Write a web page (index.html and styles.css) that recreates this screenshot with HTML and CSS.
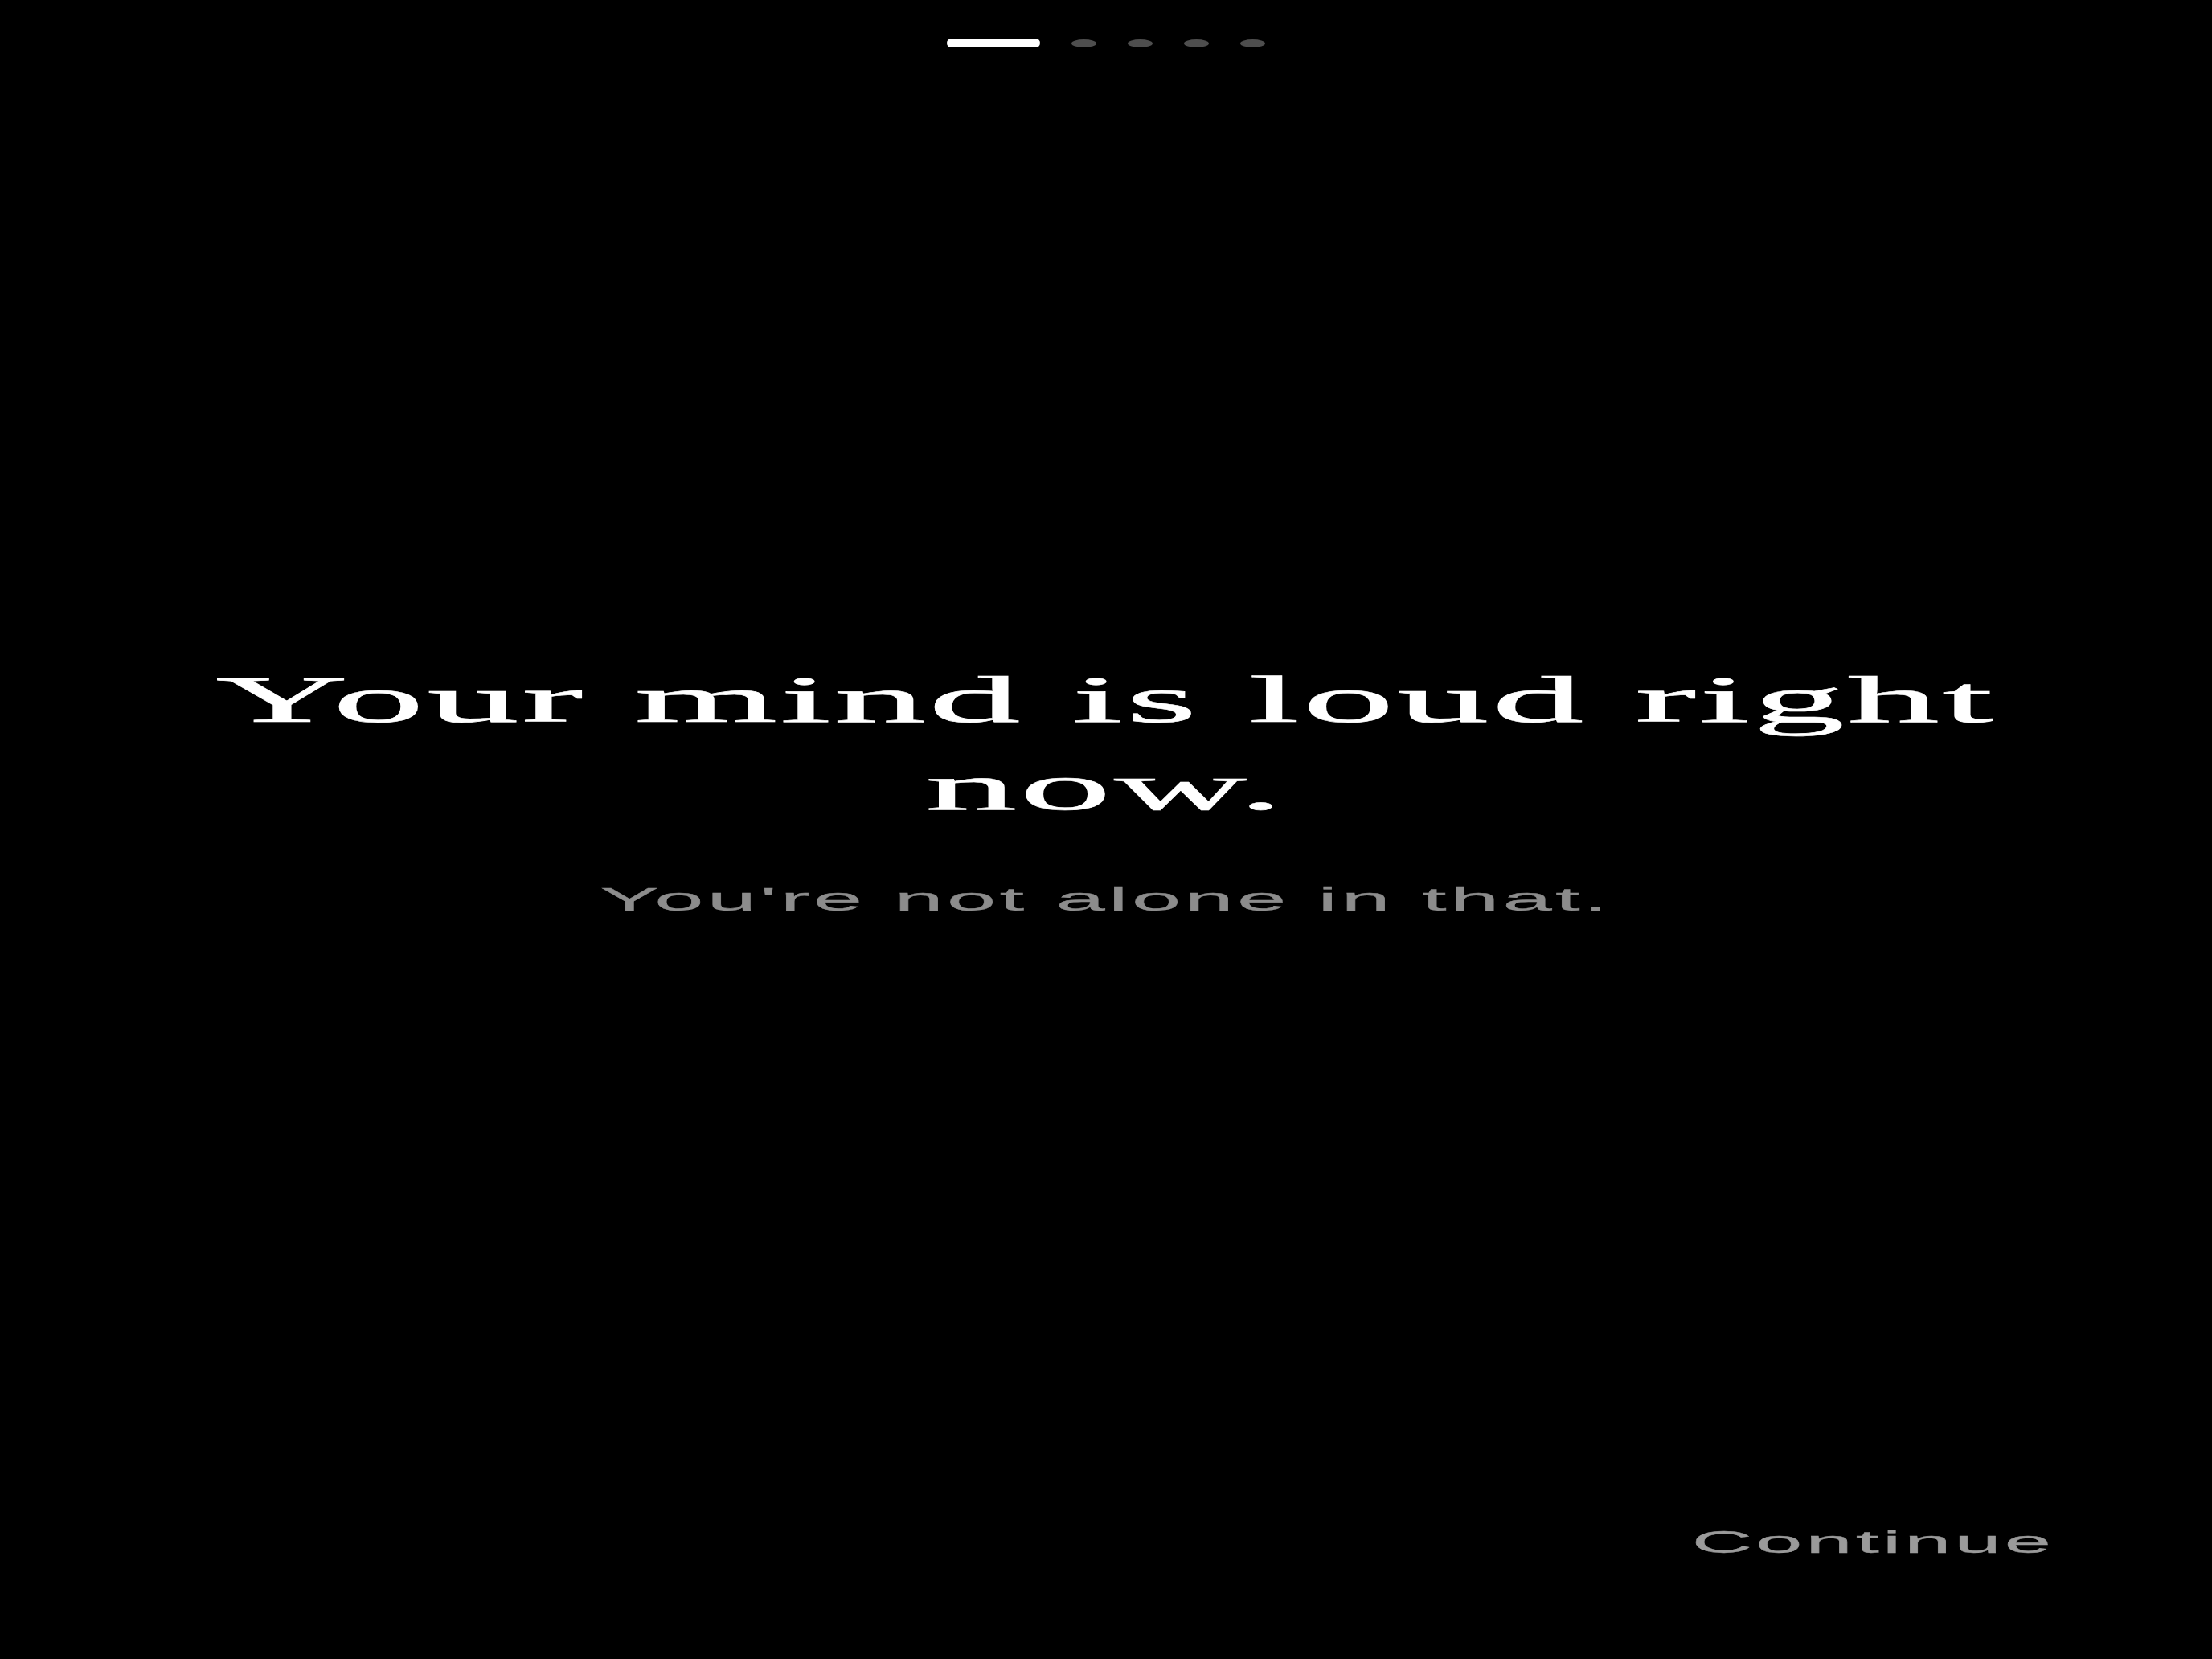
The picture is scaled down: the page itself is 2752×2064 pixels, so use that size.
FILE: index.html
```html
<!DOCTYPE html>
<html lang="en">
<head>
<meta charset="utf-8">
<title>Onboarding</title>
<link rel="stylesheet" href="styles.css">
</head>
<body>
<div class="screen">
  <div class="pager">
    <span class="pager-pill"></span>
    <span class="pager-dot"></span>
    <span class="pager-dot"></span>
    <span class="pager-dot"></span>
    <span class="pager-dot"></span>
  </div>
  <main class="content">
    <h1 class="title">Your mind is loud right<br>now.</h1>
    <p class="subtitle">You're not alone in that.</p>
  </main>
  <footer class="footer">
    <button class="continue" type="button">Continue</button>
  </footer>
</div>
</body>
</html>
```

FILE: styles.css
```css
html, body {
  margin: 0;
  padding: 0;
  background: #000;
}

body {
  width: 2752px;
  height: 2064px;
  overflow: hidden;
}

.screen {
  display: flex;
  flex-direction: column;
  height: 100%;
}

.pager {
  display: flex;
  justify-content: center;
  align-items: center;
  gap: 39px;
  padding-top: 48px;
  height: 11px;
}

.pager-pill {
  width: 116px;
  height: 11px;
  border-radius: 6px;
  background: #ffffff;
}

.pager-dot {
  width: 31px;
  height: 10px;
  border-radius: 50%;
  background: #4e4e4e;
}

.content {
  display: flex;
  flex-direction: column;
  align-items: center;
  margin-top: 757px;
}

.title {
  margin: 0;
  font-family: "Liberation Serif", "Times New Roman", serif;
  font-weight: normal;
  font-size: 83px;
  line-height: 109px;
  letter-spacing: 1.3px;
  color: #ffffff;
  text-align: center;
  -webkit-text-stroke: 0.6px #ffffff;
  transform: scaleX(2.75);
  transform-origin: center;
}

.subtitle {
  margin: 61px 0 0;
  font-family: "Liberation Sans", Arial, sans-serif;
  font-size: 40px;
  line-height: 48px;
  letter-spacing: 1.6px;
  color: #8c8c8c;
  text-align: center;
  -webkit-text-stroke: 0.3px #8c8c8c;
  transform: scaleX(2.75);
  transform-origin: center;
}

.footer {
  display: flex;
  justify-content: flex-end;
  margin-top: 753px;
  padding-right: 196px;
}

.continue {
  margin: 0;
  padding: 0;
  border: 0;
  background: none;
  font-family: "Liberation Sans", Arial, sans-serif;
  font-size: 38px;
  line-height: 46px;
  letter-spacing: 1.5px;
  color: #9a9a9a;
  -webkit-text-stroke: 0.3px #9a9a9a;
  transform: scaleX(2.75);
  transform-origin: right center;
}
```
